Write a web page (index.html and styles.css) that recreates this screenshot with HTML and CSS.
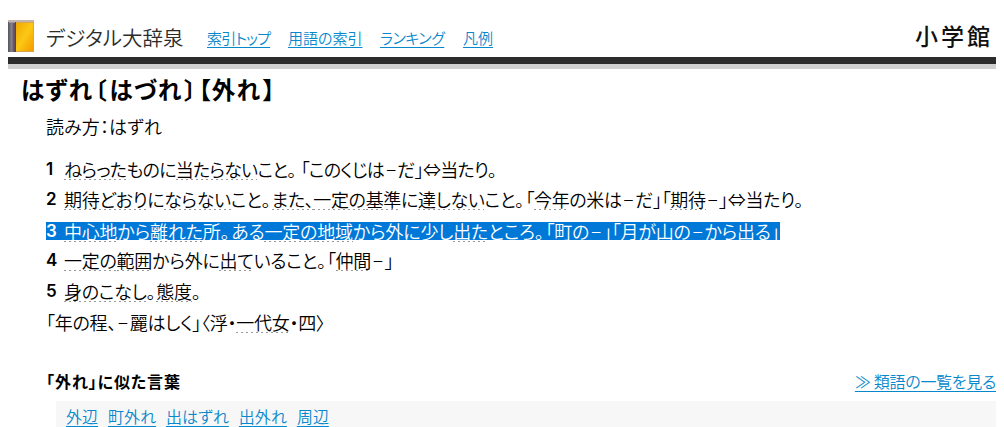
FILE: index.html
```
<!DOCTYPE html>
<html lang="ja">
<head>
    <meta charset="UTF-8">
    <title>はずれ - デジタル大辞泉</title>
    <link rel="stylesheet" href="styles.css">
</head>
<body>

    <!-- Dictionary header -->
    <header>
        <svg class="book" width="26" height="32" viewBox="0 0 26 32">
            <defs>
                <linearGradient id="cover" x1="0" y1="0" x2="1" y2="1">
                    <stop offset="0" stop-color="#f0a800"/>
                    <stop offset="0.5" stop-color="#fcc814"/>
                    <stop offset="1" stop-color="#f59a00"/>
                </linearGradient>
                <linearGradient id="spine" x1="0" y1="0" x2="1" y2="0">
                    <stop offset="0" stop-color="#55535c"/>
                    <stop offset="0.45" stop-color="#85828f"/>
                    <stop offset="0.7" stop-color="#6a5668"/>
                    <stop offset="1" stop-color="#54404a"/>
                </linearGradient>
            </defs>
            <rect width="26" height="32" fill="#d9a64a"/>
            <rect x="0" y="1" width="8" height="31" fill="url(#spine)"/>
            <rect x="8" y="3" width="17" height="28" fill="url(#cover)"/>
            <rect x="0" y="0" width="26" height="2" fill="#c3b4ae"/>
            <rect x="1" y="2" width="6" height="1" fill="#9a90b0"/>
        </svg>
        <h1>デジタル大辞泉</h1>
        <nav>
            <a class="nav-index" href="#">索引トップ</a>
            <a class="nav-terms" href="#">用語の索引</a>
            <a class="nav-ranking" href="#">ランキング</a>
            <a class="nav-legend" href="#">凡例</a>
        </nav>
        <div class="publisher">小学館</div>
    </header>

    <!-- Entry -->
    <h2>はずれ<i>〔</i>はづれ<i>〕</i>【外れ<i>】</i></h2>
    <div class="entry">
        <p class="reading">読み方：はずれ</p>
        <p class="tight"><b>1</b><span><a>ねらった</a>ものに<a>当たらない</a>こと<i>。</i>「このくじは<em>−</em>だ」⇔当たり。</span></p>
        <p class="medium"><b>2</b><span><a>期待どおり</a>に<a>ならない</a>こと<i>。</i><a>また、</a><a>一定の</a><a>基準</a>に<a>達しない</a>こと<i>。</i>「<a>今年</a>の米は<em>−</em>だ」「<a>期待</a><em>−</em>」⇔当たり。</span></p>
        <p class="selected"><b>3</b><span><a>中心地</a>から<a>離れた</a>所<i>。</i>ある<a>一定の</a><a>地域</a>から外に少し<a>出た</a>ところ<i>。</i>「町の<em>−</em>」「月が山の<em>−</em>から出る」</span></p>
        <p class="loose"><b>4</b><span><a>一定の</a><a>範囲</a>から外に<a>出て</a>いること<i>。</i>「<a>仲間</a><em>−</em>」</span></p>
        <p class="loose"><b>5</b><span><a>身のこなし</a><i>。</i><a>態度</a>。</span></p>
        <p class="loose"><span>「年の程、<em>−</em>麗はしく」〈浮・<a>一代女</a>・四〉</span></p>
    </div>

    <!-- Similar words -->
    <div class="similar-head">
        <h3>「外れ」に似た言葉</h3>
        <a href="#">≫ 類語の一覧を見る</a>
    </div>
    <div class="similar">
        <a href="#">外辺</a>
        <a href="#">町外れ</a>
        <a href="#">出はずれ</a>
        <a href="#">出外れ</a>
        <a href="#">周辺</a>
    </div>

</body>
</html>
```
FILE: styles.css
```
body {
    margin: 0;
    padding: 20px 8px 0;
    font-family: "Noto Sans CJK JP", sans-serif;
    font-weight: 350;
    font-feature-settings: "palt";
    background-color: #fff;
    color: #000;
}

h1, h2, h3, p {
    margin: 0;
}

i, em {
    font-style: normal;
}

/* Header */
header {
    display: flex;
    height: 37px;
    border-bottom: 7px solid #2c2c2c;
    box-shadow: 0 5px 0 #d0d0d0;
}

.book {
    flex: none;
}

header h1 {
    margin-left: 12px;
    width: 161px;
    font-size: 20.5px;
    font-weight: 350;
    line-height: 34px;
    color: #2c2c2c;
    white-space: nowrap;
}

nav {
    display: flex;
    line-height: 35px;
    font-size: 15px;
}

nav a, .similar a, .similar-head a {
    color: #0788cc;
    white-space: nowrap;
    text-underline-offset: 3px;
}

.nav-index {
    width: 81px;
    letter-spacing: -0.8px;
}

.nav-terms {
    width: 92px;
}

.nav-ranking {
    width: 83px;
    letter-spacing: -0.5px;
}

.publisher {
    margin-left: auto;
    margin-right: 3px;
    font-size: 23px;
    font-weight: 500;
    letter-spacing: 3px;
    line-height: 31px;
    color: #111;
}

/* Entry */
h2 {
    margin: 7px 0 0 13px;
    height: 38px;
    font-size: 23.5px;
    font-weight: 700;
    line-height: 37px;
    letter-spacing: 1.3px;
    white-space: nowrap;
}

h2 i {
    margin: 0 1.5px;
}

.entry {
    margin-left: 38px;
    font-size: 18px;
    line-height: 30.6px;
}

.entry p {
    display: flex;
    width: max-content;
    height: 30.6px;
    white-space: nowrap;
}

.entry .reading {
    margin: 2px 0 12px;
    letter-spacing: 0.1px;
}

.entry b {
    width: 18px;
    font-family: Inter, "Liberation Sans", sans-serif;
    font-size: 17px;
    font-weight: 600;
    letter-spacing: 0;
}

.entry a {
    background: repeating-linear-gradient(90deg, #999 0 2px, transparent 2px 5px) 0 23px / 100% 1px no-repeat;
}

.entry em {
    margin: 0 2px;
}

.tight {
    letter-spacing: -0.75px;
}

.tight i {
    margin-right: 5px;
}

.medium {
    letter-spacing: -0.35px;
}

.medium i {
    margin-right: 1.5px;
}

.loose {
    letter-spacing: -0.25px;
}

.loose i {
    margin-right: 1px;
}

.entry .selected {
    height: 18px;
    margin: 7px 0 5.6px;
    line-height: 18px;
    letter-spacing: -0.2px;
    background-color: #0078d7;
    color: #fff;
}

.selected i {
    margin-right: 2px;
}

/* Similar words */
.similar-head {
    display: flex;
    justify-content: space-between;
    margin: 32px 0 0 38px;
    height: 32px;
    line-height: 24px;
    font-size: 16px;
}

.similar-head h3 {
    font-size: 16px;
    font-weight: 700;
    letter-spacing: 0.9px;
}

.similar-head a {
    letter-spacing: -0.3px;
}

.similar {
    display: flex;
    gap: 10px;
    margin-left: 48px;
    padding-left: 10px;
    height: 26px;
    line-height: 30px;
    font-size: 16px;
    background-color: #f7f7f7;
}
```
